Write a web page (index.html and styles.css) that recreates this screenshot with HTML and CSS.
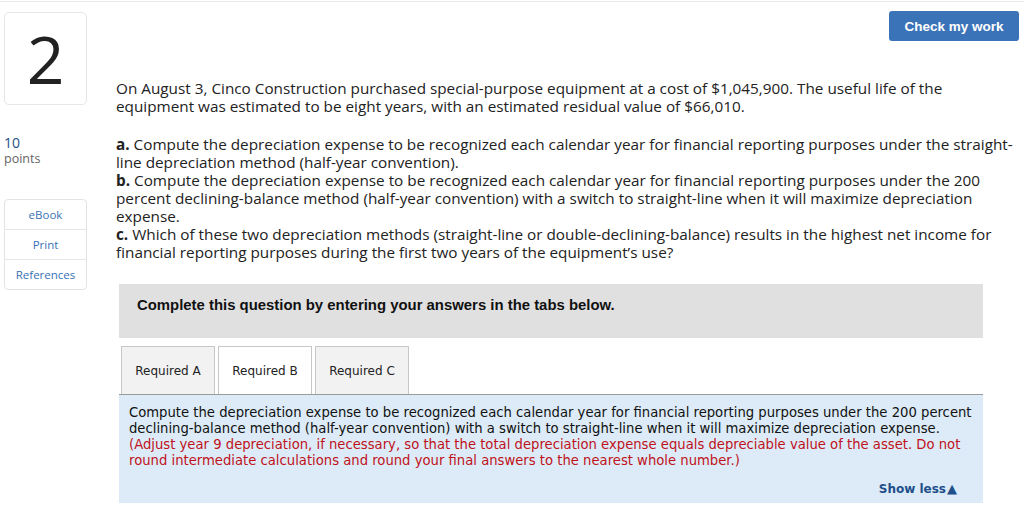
FILE: index.html
```html
<!DOCTYPE html>
<html>
<head>
<meta charset="utf-8">
<link rel="stylesheet" href="styles.css">
</head>
<body>
<div class="topline"></div>
<div class="page">
  <aside class="side">
    <div class="qnum">2</div>
    <div class="points"><div class="pval">10</div><div class="plabel">points</div></div>
    <div class="links">
      <div class="link">eBook</div>
      <div class="link">Print</div>
      <div class="link">References</div>
    </div>
  </aside>
  <main class="main">
    <div class="header"><button class="check">Check my work</button></div>
    <p class="intro">On August 3, Cinco Construction purchased special-purpose equipment at a cost of $1,045,900. The useful life of the equipment was estimated to be eight years, with an estimated residual value of $66,010.</p>
    <p class="parts"><b>a.</b> Compute the depreciation expense to be recognized each calendar year for financial reporting purposes under the straight-line depreciation method (half-year convention).<br><b>b.</b> Compute the depreciation expense to be recognized each calendar year for financial reporting purposes under the 200 percent declining-balance method (half-year convention) with a switch to straight-line when it will maximize depreciation expense.<br><b>c.</b> Which of these two depreciation methods (straight-line or double-declining-balance) results in the highest net income for financial reporting purposes during the first two years of the equipment’s use?</p>
    <div class="answer">
      <div class="banner">Complete this question by entering your answers in the tabs below.</div>
      <div class="tabs">
        <div class="tab">Required A</div>
        <div class="tab active">Required B</div>
        <div class="tab">Required C</div>
      </div>
      <div class="panel">
        <p class="ptext">Compute the depreciation expense to be recognized each calendar year for financial reporting purposes under the 200 percent declining-balance method (half-year convention) with a switch to straight-line when it will maximize depreciation expense. <span class="red">(Adjust year 9 depreciation, if necessary, so that the total depreciation expense equals depreciable value of the asset. Do not round intermediate calculations and round your final answers to the nearest whole number.)</span></p>
        <div class="showless">Show less<span class="tri">▲</span></div>
      </div>
    </div>
  </main>
</div>
</body>
</html>
```
FILE: styles.css
```css
html, body { margin: 0; padding: 0; background: #fff; }
body { font-family: "Open Sans", "Liberation Sans", sans-serif; color: #222; }
.topline { height: 1px; margin-top: 1px; background: #e8e8e8; }
.page { display: grid; grid-template-columns: 83px 1fr; column-gap: 29px; padding: 0 5px 0 4px; }
.side { display: flex; flex-direction: column; }
.qnum { margin-top: 10px; height: 93px; border: 1px solid #e6e6e6; border-radius: 5px; display: flex; align-items: center; justify-content: center; font-family: "Open Sans", sans-serif; font-weight: 400; font-size: 66px; color: #222; line-height: 1; padding-bottom: 2px; box-sizing: border-box; }
.points { margin-top: 29px; }
.pval { font-size: 14px; color: #1d4e85; line-height: 17px; }
.plabel { font-size: 12.5px; color: #666; line-height: 16px; }
.links { margin-top: 32px; border: 1px solid #e3e3e3; border-radius: 4px; }
.link { height: 29px; display: flex; align-items: center; justify-content: center; font-size: 11.5px; color: #3a72b5; border-top: 1px solid #e6e6e6; }
.link:first-child { border-top: none; }
.main { display: flex; flex-direction: column; }
.header { display: flex; justify-content: flex-end; padding-top: 9px; }
.check { width: 130px; height: 30px; border: none; border-radius: 3px; background: #3b73b8; color: #fff; font-family: "Liberation Sans", Arial, sans-serif; font-weight: bold; font-size: 13.5px; padding: 0; }
.intro, .parts { margin: 0; font-size: 15.3px; line-height: 18px; color: #222; padding-right: 0; }
.intro { margin-top: 38px; }
.parts { margin-top: 20px; }
.parts b { font-weight: 700; }
.answer { margin: 23px 0 0 3px; width: 864px; }
.banner { height: 54px; box-sizing: border-box; background: #e0e0e0; display: flex; align-items: flex-start; padding: 13px 0 0 18px; line-height: 17px; font-family: "Liberation Sans", Arial, sans-serif; font-weight: bold; font-size: 14.9px; color: #111; }
.tabs { display: flex; gap: 3px; margin-top: 8px; padding-left: 2px; }
.tab { width: 92px; height: 47px; border: 1px solid #c8c8c8; border-bottom: none; background: #f2f2f2; display: flex; align-items: center; justify-content: center; font-family: "DejaVu Sans", Verdana, sans-serif; font-size: 12px; color: #222; }
.tab.active { background: #fff; }
.panel { background: #dcebf7; border-top: 1px solid #9a9a9a; padding: 10px 3px 8px 10px; height: 109px; box-sizing: border-box; }
.ptext { margin: 0; font-family: "DejaVu Sans", Verdana, sans-serif; font-size: 13.2px; line-height: 16px; color: #111; }
.red { color: #c0121b; }
.showless { text-align: right; margin-top: 12px; margin-right: 23px; font-family: "DejaVu Sans", Verdana, sans-serif; font-weight: bold; font-size: 12px; color: #1f4f8a; }
.tri { font-size: 13px; margin-left: 1px; }
```
